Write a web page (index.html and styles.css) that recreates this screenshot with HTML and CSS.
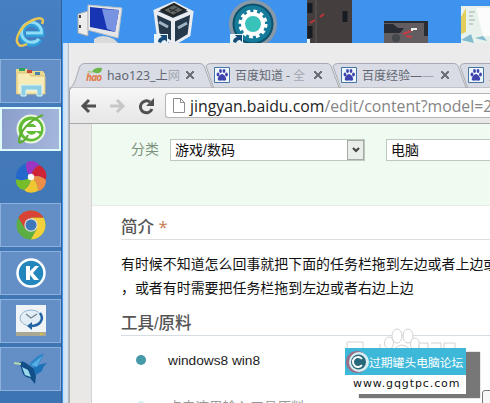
FILE: index.html
```
<!DOCTYPE html>
<html lang="zh-CN">
<head>
    <meta charset="UTF-8">
    <title>百度经验</title>
    <link rel="stylesheet" href="styles.css">
</head>
<body>
<div class="screen">
    <div class="taskbar">
        <div class="task">
            <svg width="34" height="34" viewBox="0 0 34 34">
                <path d="M26 23A10 10 0 1 1 27.500 18H12" fill="none" stroke="#2e9fda" stroke-width="6"/>
                <path d="M25 23A10 10 0 1 1 27.500 17H12" fill="none" stroke="#8edcf6" stroke-width="3"/>
                <path d="M5 29C-1 24 7 9 19 4c7-3 12-2 9 4M5 29c2 2 6 0 8-1" fill="none" stroke="#e9c654" stroke-width="2.500"/>
            </svg>
        </div>
        <div class="task open">
            <svg width="34" height="34" viewBox="0 0 34 34">
                <path d="M2 5h11l2 2h14l2 3v20H2z" fill="#ead98d"/>
                <path d="M3 9h12l2 3h14v18H3z" fill="#f8ecb6" stroke="#d9c27a"/>
                <path d="M5 4h6v3H5z" fill="#2fa260"/><path d="M13 6h5v3h-5z" fill="#c24c3c"/><path d="M21 8h5v3h-5z" fill="#4b84a8"/>
                <path d="M7 32V21h21v11h-5v-6H12v6z" fill="#8fcfe4" stroke="#d8f4fa"/>
            </svg>
        </div>
        <div class="task active">
            <svg width="34" height="34" viewBox="0 0 34 34">
                <circle cx="17" cy="17" r="13.500" fill="#62bc34" stroke="#eaf7df" stroke-width="2"/>
                <path d="M24 21a7.500 7.500 0 1 1 1-4H12" fill="none" stroke="#fff" stroke-width="4"/>
                <path d="M5 31C4 20 16 8 29 3M5 31c6-2 7-4 9-8" fill="none" stroke="#5fae31" stroke-width="2"/>
            </svg>
        </div>
        <div class="task">
            <svg width="34" height="34" viewBox="-17 -17 34 34">
                <path d="M0 0Q-7-6-4-15Q4-18 8-12Q1-8 0 0z" fill="#9b35c4"/>
                <path d="M0 0Q1-8 8-12Q17-8 15 3Q8-3 0 0z" fill="#cf2338"/>
                <path d="M0 0Q8-3 15 3Q15 12 7 14Q7 5 0 0z" fill="#ee8d45"/>
                <path d="M0 0Q7 5 7 14Q-2 18-7 13Q0 8 0 0z" fill="#f0c633"/>
                <path d="M0 0Q0 8-7 13Q-16 11-15 2Q-7 5 0 0z" fill="#76bd2a"/>
                <path d="M0 0Q-7 5-15 2Q-16-9-5-14Q-6-5 0 0z" fill="#2568cc"/>
                <circle r="3.200" fill="#fff"/>
            </svg>
        </div>
        <div class="task open">
            <svg width="34" height="34" viewBox="-17 -17 34 34">
                <circle r="14.500" fill="#5cae43"/>
                <path d="M-12.600-7.200A14.500 14.500 0 0 1 12.600-7.200H0L-6 3.500z" fill="#d94336"/>
                <path d="M12.600-7.200A14.500 14.500 0 0 1 0 14.500L6 3.500 0-7.200z" fill="#f4d13a"/>
                <circle r="6.700" fill="#ddd"/><circle r="5.500" fill="#3f78b8"/>
            </svg>
        </div>
        <div class="task open">
            <svg width="34" height="34" viewBox="-17 -17 34 34">
                <circle r="13.500" fill="#2386bd" stroke="#fff" stroke-width="2.500"/>
                <path d="M-5-7h4v5l5-5h4l-6 7 6 7H3l-4-5v5h-4z" fill="#fff"/>
            </svg>
        </div>
        <div class="task open">
            <svg width="34" height="34" viewBox="0 0 34 34">
                <path d="M2 1h30v27H2z" fill="#f1f4f6"/><path d="M2 28h30v4H2z" fill="#aaa795"/><path d="M26 29h3v2h-3z" fill="#d1b943"/>
                <ellipse cx="17" cy="14" rx="11" ry="8" fill="#e2edf5" stroke="#91b5d0"/>
                <path d="M12 10l5 4 6-4" fill="none" stroke="#708090" stroke-width="1.200"/>
                <path d="M26 9c5 7-1 13-9 13" fill="none" stroke="#2463a2" stroke-width="2.500"/><path d="M18 18v8l-5-4z" fill="#2463a2"/>
            </svg>
        </div>
        <div class="task open">
            <svg width="34" height="34" viewBox="0 0 34 34">
                <path d="M15 13Q19 6 30 1Q27 9 22 17z" fill="#2e83c8"/>
                <path d="M18 17Q24 12 33 11Q29 14 28 19L20 24z" fill="#1d71b6"/>
                <path d="M5 11q3-3 7 0 4 3 7 5l3 8-1 8-5-6Q9 25 8 19 7 14 5 11z" fill="#124f88"/>
                <path d="M17 13L28 4 23 15z" fill="#54aee4"/>
                <path d="M8 15l3 8 6 2-3-7z" fill="#9bd9ec"/><path d="M0 11l7 1" stroke="#b5d9a8" stroke-width="2"/>
            </svg>
        </div>
    </div>

    <div class="desktop">
        <div class="icons">
            <svg width="428" height="43" viewBox="0 0 428 43">
                <!-- computer -->
                <g transform="translate(-1)">
                    <path d="M17 14l10-3v25l-10-3z" fill="#ececec" stroke="#aaa"/><path d="M19 15v3M19 25v3" stroke="#444" stroke-width="2"/>
                    <path d="M27 5l34 3-4 30-30-8z" fill="#e7e7e7" stroke="#bcc2c8"/>
                    <path d="M29 7l29 3-4 22-25-5z" fill="#1735b3"/><path d="M41 9l5 20 8 3 4-22z" fill="#7793e2"/>
                    <path d="M33 39q8-6 20 0l4 4H33z" fill="#dadada"/>
                </g>
                <!-- box -->
                <g transform="translate(-2)">
                    <path d="M95 11l19-8 18 9-3 23-15 9-16-10z" fill="#26384c" stroke="#e9edf1" stroke-width="3"/>
                    <path d="M95 12l18 8 19-8M113 20v24" fill="none" stroke="#e9edf1" stroke-width="4"/>
                    <path d="M102 10l12-6 11 6-12 6z" fill="#5f6668" stroke="#222" stroke-width="2"/><path d="M109 9l8 3M117 8l-7 4" stroke="#222"/><path d="M99 22l9 5M118 28l9-5" stroke="#9fb5c6" stroke-width="3"/>
                    <path d="M94 34h14v9H94z" fill="#e8f4fa"/><path d="M98 42q0-4 4-5l-2-2h7v7l-2-2q-3 0-4 3z" fill="#174b78"/>
                </g>
                <!-- gear -->
                <g transform="translate(-3)">
                    <circle cx="194" cy="24" r="22" fill="#147b9a" stroke="#8998a7" stroke-width="4"/>
                    <circle cx="194" cy="24" r="19.500" fill="none" stroke="#0d526d" stroke-width="2"/>
                    <circle cx="194" cy="24" r="10" fill="#39c2b9" stroke="#fff" stroke-width="4"/>
                    <circle cx="194" cy="24" r="12.500" fill="none" stroke="#fff" stroke-width="4" stroke-dasharray="3.600 2.945"/>
                    <path d="M171 34h13v9h-13z" fill="#e8f4fa"/><path d="M174 42q0-4 4-5l-2-2h7v7l-2-2q-3 0-4 3z" fill="#174b78"/>
                </g>
                <!-- photos -->
                <path d="M245 0h45v43h-45z" fill="#453e3e"/><path d="M248 3v10M248 26v12M283 11v11" stroke="#171c22" stroke-width="5"/><path d="M254 0v43" stroke="#605958"/><path d="M248 23l5-3M262 14l-4 3" stroke="#bd3438" stroke-width="2"/><path d="M245 39h3v4h-3z" fill="#e8f4fa"/>
                <path d="M322 21h44v22h-44z" fill="#625d60"/><path d="M322 21h44v2h-44zM322 24h9l5 4h6l-4 5h-16zM362 22h4v14h-4z" fill="#292c32"/><circle cx="334" cy="38" r="4" fill="#44474b"/><path d="M341 34l8-3M350 37l-6-1" stroke="#c63d45" stroke-width="2"/><path d="M350 31v-2h5" fill="none" stroke="#eee" stroke-width="2"/>
                <path d="M399 6h29v37h-29z" fill="#e8f2ed"/><path d="M399 17l5-9v24l-5 2z" fill="#e2cf5a"/><path d="M414 8h14v28h-7z" fill="#fbfcfb"/><path d="M399 40l10-6 3 9zM413 38l8-2 4 5z" fill="#83bbd1"/><path d="M407 12h6M407 16h4M407 20h6M407 24h4" stroke="#a3aaa2"/>
            </svg>
        </div>

        <div class="browser">
            <div class="tabs">
                <div class="tab first">
                    <svg class="shape" viewBox="0 0 143 25"><path d="M.5 24.500C5 23 8 7 10 3Q11 .5 15 .5H130Q133 .5 134 3L142 24.500" fill="#d9dce4" stroke="#a7abb3"/></svg>
                    <svg width="17" height="16" viewBox="0 0 17 16"><path d="M6 5q2-5 10-4 0 6-6 5z" fill="#6eb54a"/><path d="M1 5q4-3 5 1z" fill="#a3cb83"/><text class="hao" x="0" y="14" textLength="16">hao</text></svg>
                    <span class="title">hao123_上<i>网</i></span><b class="close"></b>
                </div>
                <div class="tab">
                    <svg class="shape" viewBox="0 0 143 25"><path d="M9 3Q10 .5 14 .5H130Q133 .5 134 3L142 24.500H16.500z" fill="#d9dce4"/><path d="M16.500 24.500L9 3Q10 .5 14 .5H130Q133 .5 134 3L142 24.500" fill="none" stroke="#a7abb3"/></svg>
                    <svg class="paw" viewBox="0 0 16 16"><path d="M.5.5h15v15H.5z" fill="#eff9fc" stroke="#4774a5"/><g fill="#3f43ad"><ellipse cx="4" cy="7.500" rx="1.400" ry="1.900"/><ellipse cx="6.500" cy="4" rx="1.400" ry="2"/><ellipse cx="10" cy="4" rx="1.400" ry="2"/><ellipse cx="12.500" cy="7.500" rx="1.400" ry="1.900"/><path d="M8 7c2 0 5 4 4 6-1 1-2 .5-4 .5s-3 .5-4-.5C3 11 6 7 8 7z"/></g></svg>
                    <span class="title">百度知道 - <i>全</i></span><b class="close"></b>
                </div>
                <div class="tab">
                    <svg class="shape" viewBox="0 0 143 25"><path d="M9 3Q10 .5 14 .5H130Q133 .5 134 3L142 24.500H16.500z" fill="#d9dce4"/><path d="M16.500 24.500L9 3Q10 .5 14 .5H130Q133 .5 134 3L142 24.500" fill="none" stroke="#a7abb3"/></svg>
                    <svg class="paw" viewBox="0 0 16 16"><path d="M.5.5h15v15H.5z" fill="#eff9fc" stroke="#4774a5"/><g fill="#3f43ad"><ellipse cx="4" cy="7.500" rx="1.400" ry="1.900"/><ellipse cx="6.500" cy="4" rx="1.400" ry="2"/><ellipse cx="10" cy="4" rx="1.400" ry="2"/><ellipse cx="12.500" cy="7.500" rx="1.400" ry="1.900"/><path d="M8 7c2 0 5 4 4 6-1 1-2 .5-4 .5s-3 .5-4-.5C3 11 6 7 8 7z"/></g></svg>
                    <span class="title">百度经验—<i>—</i></span><b class="close"></b>
                </div>
                <div class="tab">
                    <svg class="shape" viewBox="0 0 143 25"><path d="M9 3Q10 .5 14 .5H130Q133 .5 134 3L142 24.500H16.500z" fill="#d9dce4"/><path d="M16.500 24.500L9 3Q10 .5 14 .5H130Q133 .5 134 3L142 24.500" fill="none" stroke="#a7abb3"/></svg>
                    <svg class="paw" viewBox="0 0 16 16"><path d="M.5.5h15v15H.5z" fill="#eff9fc" stroke="#4774a5"/><g fill="#3f43ad"><ellipse cx="4" cy="7.500" rx="1.400" ry="1.900"/><ellipse cx="6.500" cy="4" rx="1.400" ry="2"/><ellipse cx="10" cy="4" rx="1.400" ry="2"/><ellipse cx="12.500" cy="7.500" rx="1.400" ry="1.900"/><path d="M8 7c2 0 5 4 4 6-1 1-2 .5-4 .5s-3 .5-4-.5C3 11 6 7 8 7z"/></g></svg>
                    <span class="title">主</span>
                </div>
            </div>

            <div class="toolbar">
                <svg width="76" height="18" viewBox="0 0 76 18" fill="none" stroke-width="3">
                    <path d="M16 9H3M9 3L3 9l6 6" stroke="#505050"/>
                    <path d="M30 9h13M37 3l6 6-6 6" stroke="#c7c7c7"/>
                    <path d="M70 5a6 6 0 1 0 2 7" stroke="#505050"/><path d="M74 1v8h-8z" fill="#505050"/>
                </svg>
                <div class="address">
                    <svg width="12" height="15" viewBox="0 0 12 15"><path d="M.5.5h7l4 4v10H.5zM7.500.5v4h4" fill="#fff" stroke="#8d8d8d"/></svg>
                    <span class="url">jingyan.baidu.com<span>/edit/content?model=2</span></span>
                </div>
            </div>

            <div class="page">
                <div class="sheet">
                    <div class="category">
                        <label>分类</label>
                        <div class="select">游戏/数码<span class="drop"><svg width="8" height="7" viewBox="0 0 8 7"><path d="M1 1l3 3 3-3" fill="none" stroke="#444" stroke-width="2.200"/></svg></span></div>
                        <div class="select sub">电脑</div>
                    </div>
                    <div class="article">
                        <h2>简介 <em>*</em></h2>
                        <p>有时候不知道怎么回事就把下面的任务栏拖到左边或者上边或<br>，或者有时需要把任务栏拖到左边或者右边上边</p>
                        <h2 class="tools">工具/原料</h2>
                        <ul>
                            <li>windows8 win8</li>
                            <li class="hint">点击这里输入工具原料</li>
                        </ul>
                    </div>
                </div>
            </div>
        </div>
    </div>

    <svg class="mark" width="110" height="34" viewBox="0 0 110 34" fill="#fff" stroke="#d2d2d2">
        <ellipse cx="51" cy="10" rx="5" ry="7"/><ellipse cx="62" cy="10" rx="5" ry="7"/><ellipse cx="43" cy="17" rx="4.500" ry="6"/><ellipse cx="69" cy="18" rx="4.500" ry="6"/>
        <path d="M43 32q4-12 13-13 9 1 13 13M1 30v-14h16v9M34 30v-12M73 30v-13h9v8M85 17h10v8M98 30v-13h11v8"/>
    </svg>
    <div class="watermark">
        <div class="brand">
            <svg width="24" height="24" viewBox="0 0 24 24"><circle cx="12" cy="12" r="11" fill="#9a6f89"/><circle cx="14" cy="12" r="10" fill="#d9eef1"/><circle cx="13.500" cy="12" r="7.500" fill="#286779"/><path d="M17 9a5 5 0 1 0 0 6" fill="none" stroke="#fff" stroke-width="2"/></svg>
            <span>过期罐头电脑论坛</span>
        </div>
        <div class="site">www.gqgtpc.com</div>
    </div>
    <div class="corner"></div>
</div>
</body>
</html>
```
FILE: styles.css
```
* {
    box-sizing: border-box;
}

body {
    margin: 0;
    font-family: "Noto Sans", "Noto Sans CJK SC", sans-serif;
}

.screen {
    position: relative;
    display: flex;
    width: 490px;
    height: 403px;
    overflow: hidden;
}

/* taskbar */
.taskbar {
    width: 62px;
    flex: none;
    padding-top: 11px;
    background: linear-gradient(#467fc2, #4379b7 40%, #3d74b2);
    border-right: 1px solid #2f6196;
}

.task {
    display: flex;
    align-items: center;
    height: 44px;
    margin: 0 0 4px;
    padding-left: 13px;
    border: 1px solid transparent;
}

.open {
    background: #638fc6;
    border-color: #8db1dc;
}

.active {
    background: linear-gradient(100deg, #899ecb, #a6b7dc);
    border: 2px solid #e0fcfa;
    padding-left: 12px;
}

/* desktop */
.desktop {
    flex: 1;
    min-width: 0;
    background: #3d93ed;
}

.icons {
    height: 43px;
}

.icons svg {
    display: block;
}

.browser {
    height: 360px;
    margin-left: 1px;
    padding-left: 6px;
    background: linear-gradient(90deg, #c9def4 0, #dceaf8 4px, #a5afba 6px, #ececec 7px);
}

.tabs {
    display: flex;
    height: 44px;
    padding-top: 20px;
    background: #ebebeb;
}

.tab {
    position: relative;
    display: flex;
    flex: none;
    align-items: center;
    width: 127px;
    height: 24px;
    padding-left: 8px;
}

.first {
    width: 137px;
    padding-left: 17px;
}

.shape {
    position: absolute;
    left: -9px;
    top: 0;
    width: 143px;
    height: 25px;
}

.first .shape {
    left: 1px;
}

.tab > * {
    flex: none;
    z-index: 1;
}

.tab > .shape {
    z-index: 0;
}

.paw {
    width: 16px;
    height: 16px;
}

.hao {
    font: italic bold 10px "Noto Sans", sans-serif;
    fill: #e17b4a;
}

.title {
    width: 74px;
    margin-left: 5px;
    font-size: 12px;
    white-space: nowrap;
    color: #626773;
}

.first .title {
    font-size: 12.3px;
    margin-left: 4px;
}

.title i {
    font-style: normal;
    opacity: .45;
}

.close {
    width: 8px;
    height: 8px;
    margin-left: 5px;
    background: linear-gradient(45deg, transparent 42%, #6d717a 42%, #6d717a 58%, transparent 58%), linear-gradient(-45deg, transparent 42%, #6d717a 42%, #6d717a 58%, transparent 58%);
}

.toolbar {
    display: flex;
    align-items: center;
    height: 37px;
    padding-left: 10px;
    background: linear-gradient(#f7f7f7, #e6e6e6);
    border: solid #a9a9a9;
    border-width: 1px 0 1px 1px;
    border-top-left-radius: 4px;
}

.toolbar > svg {
    flex: none;
}

.address {
    display: flex;
    align-items: center;
    flex: 1;
    min-width: 0;
    height: 25px;
    margin-left: 9px;
    padding-left: 7px;
    background: #fff;
    border: 1px solid #b5b5b5;
    border-right: 0;
    border-radius: 3px 0 0 3px;
    overflow: hidden;
}

.address svg {
    flex: none;
}

.url {
    margin-left: 5px;
    font: 15.8px "Open Sans", sans-serif;
    white-space: nowrap;
    color: #222;
}

.url span {
    color: #858585;
}

/* page */
.page {
    height: 279px;
    padding-left: 21px;
    background: #eae8e7;
    border-left: 1px solid #aaa;
}

.sheet {
    height: 100%;
    background: #fff;
    border-left: 1px solid #d2d6d4;
    font-family: "Liberation Sans", "Noto Sans CJK SC", sans-serif;
}

.category {
    display: flex;
    align-items: flex-start;
    height: 82px;
    padding: 15px 0 0 39px;
    background: #effaf0;
    border-bottom: 1px solid #e5ede6;
    font-size: 14px;
    line-height: 20px;
}

.category label {
    flex: none;
    width: 39px;
    color: #7c917e;
}

.select {
    display: flex;
    flex: none;
    justify-content: space-between;
    width: 195px;
    height: 22px;
    padding-left: 4px;
    background: #fff;
    border: 1px solid #bdc8be;
    color: #111;
}

.sub {
    margin-left: 21px;
}

.drop {
    display: flex;
    align-items: center;
    justify-content: center;
    width: 17px;
    background: #eaeeea;
    border: 1px solid #a5aaa6;
}

.article {
    padding: 10px 0 0 29px;
}

h2 {
    height: 24px;
    margin: 0;
    border-bottom: 1px solid #dedede;
    font-size: 16.5px;
    font-weight: 500;
    line-height: 22px;
    color: #555;
}

h2 em {
    font-style: normal;
    font-weight: normal;
    font-family: "Noto Sans", sans-serif;
    color: #c98259;
}

.article p {
    margin: 12px 0 0;
    font-size: 13.95px;
    line-height: 24px;
    white-space: nowrap;
    color: #111;
}

.article .tools {
    margin-top: 12px;
    border-color: #d5dde2;
}

ul {
    margin: 12px 0 0;
    padding: 0;
    list-style: none;
    font-size: 13.7px;
    color: #222;
}

li {
    display: flex;
    align-items: center;
    height: 24px;
    margin-bottom: 22px;
}

li::before {
    content: "";
    width: 10px;
    height: 10px;
    margin: 0 22px 0 15px;
    border-radius: 50%;
    background: #4699a6;
}

.hint {
    color: #999;
}

.hint::before {
    background: #d5f2f6;
}

/* watermark */
.mark {
    position: absolute;
    left: 346px;
    top: 326px;
}

.watermark {
    position: absolute;
    left: 345px;
    top: 348px;
    width: 121px;
    height: 46px;
    background: #fff;
    box-shadow: 14px 4px 1px #777;
}

.brand {
    display: flex;
    align-items: center;
    height: 27px;
    background: #3db8d8;
    font: 12px "Noto Sans CJK SC", sans-serif;
    white-space: nowrap;
    color: #fff;
}

.brand span {
    font-size: 11.8px;
}

.site {
    padding-left: 8px;
    font: 11px/18px "DejaVu Sans", sans-serif;
    letter-spacing: .9px;
    color: #111;
}

.corner {
    position: absolute;
    left: 482px;
    top: 390px;
    width: 20px;
    height: 20px;
    background: #f8f8f8;
    border: 1px solid #777;
    border-radius: 3px;
}
```
